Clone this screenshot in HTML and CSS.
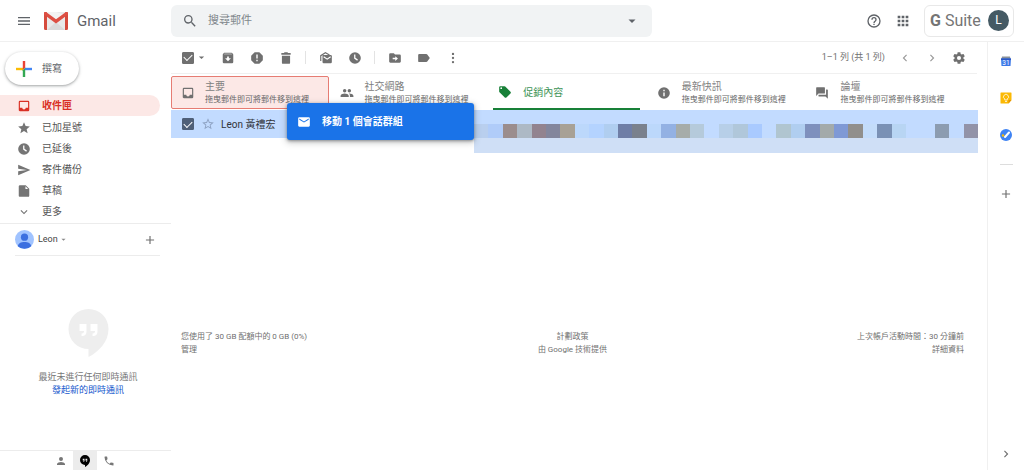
FILE: index.html
```html
<!DOCTYPE html>
<html lang="zh-Hant">
<head>
<meta charset="utf-8">
<meta name="viewport" content="width=device-width, initial-scale=1">
<title>Gmail</title>
<link rel="stylesheet" href="styles.css">
</head>
<body>
<svg class="sprite" aria-hidden="true">
  <symbol id="menu" viewBox="0 0 24 24"><path d="M3 18h18v-2H3v2zm0-5h18v-2H3v2zm0-7v2h18V6H3z"/></symbol>
  <symbol id="search" viewBox="0 0 24 24"><path d="M15.5 14h-.79l-.28-.27A6.47 6.47 0 0 0 16 9.5 6.5 6.5 0 1 0 9.5 16c1.61 0 3.09-.59 4.23-1.57l.27.28v.79l5 4.99L20.49 19l-4.99-5zm-6 0a4.5 4.5 0 1 1 0-9 4.5 4.5 0 0 1 0 9z"/></symbol>
  <symbol id="caret" viewBox="0 0 24 24"><path d="M5 9l7 7 7-7z"/></symbol>
  <symbol id="help" viewBox="0 0 24 24"><path d="M11 18h2v-2h-2v2zm1-16a10 10 0 1 0 0 20 10 10 0 0 0 0-20zm0 18a8 8 0 1 1 0-16 8 8 0 0 1 0 16zm0-14a4 4 0 0 0-4 4h2a2 2 0 1 1 4 0c0 2-3 1.750-3 5h2c0-2.250 3-2.500 3-5a4 4 0 0 0-4-4z"/></symbol>
  <symbol id="apps" viewBox="0 0 24 24"><path d="M4 8h4V4H4v4zm6 12h4v-4h-4v4zm-6 0h4v-4H4v4zm0-6h4v-4H4v4zm6 0h4v-4h-4v4zm6-10v4h4V4h-4zm-6 4h4V4h-4v4zm6 6h4v-4h-4v4zm0 6h4v-4h-4v4z"/></symbol>
  <symbol id="inbox" viewBox="0 0 24 24"><path d="M19 3H5a2 2 0 0 0-2 2v14c0 1.100.890 2 2 2h14a2 2 0 0 0 2-2V5a2 2 0 0 0-2-2zm0 12h-4a3 3 0 0 1-6 0H5V5h14v10z"/></symbol>
  <symbol id="star" viewBox="0 0 24 24"><path d="M12 17.270L18.180 21l-1.640-7.030L22 9.240l-7.190-.610L12 2 9.190 8.630 2 9.240l5.460 4.730L5.820 21z"/></symbol>
  <symbol id="star-line" viewBox="0 0 24 24"><path d="M22 9.240l-7.190-.620L12 2 9.190 8.630 2 9.240l5.460 4.730L5.820 21 12 17.270 18.180 21l-1.630-7.030L22 9.240zM12 15.400l-3.760 2.270 1-4.280-3.320-2.880 4.380-.380L12 6.100l1.710 4.040 4.380.380-3.320 2.880 1 4.280L12 15.400z"/></symbol>
  <symbol id="clock" viewBox="0 0 24 24"><path fill-rule="evenodd" d="M12 2a10 10 0 1 0 0 20 10 10 0 0 0 0-20zM10.500 6h2.200v5.700l4.300 3-1.200 1.800-5.300-3.700z"/></symbol>
  <symbol id="send" viewBox="0 0 24 24"><path d="M2.010 21L23 12 2.010 3 2 10l15 2-15 2z"/></symbol>
  <symbol id="file" viewBox="0 0 24 24"><path d="M5 2a2 2 0 0 0-2 2v16c0 1.100.890 2 2 2h14a2 2 0 0 0 2-2V8l-6-6H5zm9.500 6.500V4L19 8.500z"/></symbol>
  <symbol id="down" viewBox="0 0 24 24"><path d="M7.410 8.590L12 13.170l4.590-4.580L18 10l-6 6-6-6z"/></symbol>
  <symbol id="left" viewBox="0 0 24 24"><path d="M15.410 7.410L14 6l-6 6 6 6 1.410-1.410L10.830 12z"/></symbol>
  <symbol id="right" viewBox="0 0 24 24"><path d="M10 6L8.590 7.410 13.170 12l-4.580 4.590L10 18l6-6z"/></symbol>
  <symbol id="plus" viewBox="0 0 24 24"><path d="M19 13h-6v6h-2v-6H5v-2h6V5h2v6h6v2z"/></symbol>
  <symbol id="archive" viewBox="0 0 24 24"><path fill-rule="evenodd" d="M20.540 5.230l-1.390-1.680A1.450 1.450 0 0 0 18 3H6c-.470 0-.880.210-1.160.550L3.460 5.230A2 2 0 0 0 3 6.500V19a2 2 0 0 0 2 2h14a2 2 0 0 0 2-2V6.500c0-.480-.170-.930-.460-1.270zM5.100 5.500L6 4.600h12l.900.900zM12 17.500L7 12.500h3.500V9.500h3v3H17z"/></symbol>
  <symbol id="spam" viewBox="0 0 24 24"><path fill-rule="evenodd" d="M8 2h8l6 6v8l-6 6H8l-6-6V8zm2.800 4v7h2.400V6zm0 9v2.500h2.400V15z"/></symbol>
  <symbol id="trash" viewBox="0 0 24 24"><path d="M5 8v12a2 2 0 0 0 2 2h10a2 2 0 0 0 2-2V8zM4 3.500v2.800h16V3.500h-4.500L14.500 2h-5l-1 1.500z"/></symbol>
  <symbol id="unread" viewBox="0 0 24 24"><path d="M6 7h14a2 2 0 0 1 2 2v10a2 2 0 0 1-2 2H8a2 2 0 0 1-2-2z"/><path d="M3 17V8l8-5 7 4" fill="none" stroke="currentColor" stroke-width="2"/><path d="M8 10l6 4 6-4" fill="none" stroke="#fff" stroke-width="2"/></symbol>
  <symbol id="move" viewBox="0 0 24 24"><path fill-rule="evenodd" d="M20 6h-8l-2-2H4a2 2 0 0 0-2 2v12a2 2 0 0 0 2 2h16a2 2 0 0 0 2-2V8a2 2 0 0 0-2-2zm-7.500 11v-2.700H8v-2.600h4.500V9l4.500 4z"/></symbol>
  <symbol id="label" viewBox="0 0 24 24"><path d="M17.630 5.840A2 2 0 0 0 16 5H4a2 2 0 0 0-2 2v10a2 2 0 0 0 2 2h12c.670 0 1.270-.330 1.630-.840L22 12z"/></symbol>
  <symbol id="more" viewBox="0 0 24 24"><path d="M12 7a2 2 0 1 0 0-4 2 2 0 0 0 0 4zm0 3a2 2 0 1 0 0 4 2 2 0 0 0 0-4zm0 7a2 2 0 1 0 0 4 2 2 0 0 0 0-4z"/></symbol>
  <symbol id="gear" viewBox="0 0 24 24"><path d="M19.430 12.980c.040-.320.070-.640.070-.980s-.030-.660-.070-.980l2.110-1.650a.5.5 0 0 0 .120-.640l-2-3.460a.5.5 0 0 0-.610-.220l-2.490 1a7.300 7.300 0 0 0-1.690-.980l-.380-2.650A.5.5 0 0 0 14 2h-4a.5.5 0 0 0-.490.420l-.380 2.650c-.610.250-1.170.590-1.690.980l-2.490-1a.5.5 0 0 0-.610.220l-2 3.460a.5.5 0 0 0 .120.640l2.110 1.650a8 8 0 0 0 0 1.960l-2.110 1.650a.5.5 0 0 0-.120.640l2 3.460c.120.220.390.300.610.220l2.490-1c.520.400 1.080.730 1.690.980l.380 2.650c.030.240.240.420.490.420h4c.250 0 .460-.180.490-.420l.380-2.650a7.700 7.700 0 0 0 1.690-.980l2.490 1c.230.090.490 0 .610-.220l2-3.460a.5.5 0 0 0-.120-.640zM12 15.500a3.500 3.500 0 1 1 0-7 3.500 3.500 0 0 1 0 7z"/></symbol>
  <symbol id="people" viewBox="0 0 24 24"><path d="M16 11a3 3 0 1 0 0-6 3 3 0 0 0 0 6zm-8 0a3 3 0 1 0 0-6 3 3 0 0 0 0 6zm0 2c-2.330 0-7 1.170-7 3.500V19h14v-2.500C15 14.170 10.330 13 8 13zm8 0c-.290 0-.620.020-.970.050A4.200 4.200 0 0 1 17 16.500V19h6v-2.500c0-2.330-4.670-3.500-7-3.500z"/></symbol>
  <symbol id="tag" viewBox="0 0 24 24"><path d="M21.410 11.580l-9-9A2 2 0 0 0 11 2H4a2 2 0 0 0-2 2v7c0 .550.220 1.050.590 1.420l9 9c.360.360.860.580 1.410.580s1.050-.220 1.410-.590l7-7a2 2 0 0 0 0-2.830zM5.500 7a1.500 1.500 0 1 1 0-3 1.500 1.500 0 0 1 0 3z"/></symbol>
  <symbol id="info" viewBox="0 0 24 24"><path fill-rule="evenodd" d="M12 2a10 10 0 1 0 0 20 10 10 0 0 0 0-20zm1.200 15.500h-2.400V11h2.400zm0-8.500h-2.400V6.500h2.400z"/></symbol>
  <symbol id="forum" viewBox="0 0 24 24"><path d="M21 6h-2v9H6v2c0 .550.450 1 1 1h11l4 4V7c0-.550-.450-1-1-1zm-4 6V3c0-.550-.450-1-1-1H3c-.550 0-1 .450-1 1v14l4-4h10c.550 0 1-.450 1-1z"/></symbol>
  <symbol id="mail" viewBox="0 0 24 24"><path d="M20 4H4a2 2 0 0 0-1.990 2L2 18a2 2 0 0 0 2 2h16a2 2 0 0 0 2-2V6a2 2 0 0 0-2-2zm0 4l-8 5-8-5V6l8 5 8-5v2z"/></symbol>
  <symbol id="person" viewBox="0 0 24 24"><path d="M12 12a4 4 0 1 0 0-8 4 4 0 0 0 0 8zm0 2c-2.670 0-8 1.340-8 4v2h16v-2c0-2.660-5.330-4-8-4z"/></symbol>
  <symbol id="phone" viewBox="0 0 24 24"><path d="M6.620 10.790a15 15 0 0 0 6.590 6.590l2.200-2.200a1 1 0 0 1 1.020-.240c1.120.370 2.330.570 3.570.570a1 1 0 0 1 1 1V20a1 1 0 0 1-1 1A17 17 0 0 1 3 4a1 1 0 0 1 1-1h3.500a1 1 0 0 1 1 1c0 1.250.200 2.450.570 3.570a1 1 0 0 1-.250 1.020z"/></symbol>
  <symbol id="hangouts" viewBox="0 0 40 48"><path fill-rule="evenodd" d="M20 0a20 20 0 0 0 0 40v8c10-5 20-15 20-28A20 20 0 0 0 20 0zM11 15h7v7c0 3-1 5-5 5v-2.500c2 0 2.500-1 2.500-2.500H11zm11 0h7v7c0 3-1 5-5 5v-2.500c2 0 2.500-1 2.500-2.500H22z"/></symbol>
</svg>

<header class="topbar">
  <div class="brand">
    <button class="icon-button" aria-label="主選單"><svg class="icon icon-l"><use href="#menu"/></svg></button>
    <a class="logo" href="#">
      <svg class="logo-mark" viewBox="0 0 24 18" aria-hidden="true">
        <rect width="24" height="18" rx="1.500" fill="#e9e9e9"/>
        <path d="M3 18l9-8 9 8z" fill="#dadada"/>
        <path d="M3 3l9 7 9-7v0L12 0H3z" fill="#f3f3f3"/>
        <path d="M0 1.500A1.500 1.500 0 0 1 3 1.200V18H1.500A1.500 1.500 0 0 1 0 16.500zM24 1.500a1.500 1.500 0 0 0-3-.300V18h1.500a1.500 1.500 0 0 0 1.500-1.500z" fill="#d54b3d"/>
        <path d="M0 1.500C0 0 1.600-.500 2.700.400L12 7.300 21.300.400C22.400-.500 24 0 24 1.500c0 .700-.300 1.300-.900 1.700L12 11.400.900 3.200C.300 2.800 0 2.200 0 1.500z" fill="#dd4f43"/>
      </svg>
      <span>Gmail</span>
    </a>
  </div>
  <form class="search">
    <button class="icon-button" type="button" aria-label="搜尋"><svg class="icon icon-l"><use href="#search"/></svg></button>
    <input type="text" placeholder="搜尋郵件" aria-label="搜尋郵件">
    <button class="icon-button" type="button" aria-label="搜尋選項"><svg class="icon icon-s"><use href="#caret"/></svg></button>
  </form>
  <div class="account">
    <button class="icon-button" aria-label="支援"><svg class="icon icon-l"><use href="#help"/></svg></button>
    <button class="icon-button" aria-label="應用程式"><svg class="icon icon-l"><use href="#apps"/></svg></button>
    <button class="suite"><span><b>G</b> Suite</span><span class="avatar">L</span></button>
  </div>
</header>

<div class="shell">
  <aside class="sidebar">
    <button class="compose">
      <svg class="compose-plus" viewBox="0 0 16 16" aria-hidden="true"><path fill="#fbbc04" d="M0 6.800h7v2.400H0z"/><path fill="#4285f4" d="M9 6.800h7v2.400H9z"/><path fill="#ea4335" d="M6.800 0h2.400v6.800L6.800 9.200z"/><path fill="#34a853" d="M6.800 9.200l2.400-2.400V16H6.800z"/></svg>
      撰寫
    </button>
    <nav class="folders">
      <a class="current" href="#"><svg class="icon"><use href="#inbox"/></svg>收件匣</a>
      <a href="#"><svg class="icon"><use href="#star"/></svg>已加星號</a>
      <a href="#"><svg class="icon"><use href="#clock"/></svg>已延後</a>
      <a href="#"><svg class="icon"><use href="#send"/></svg>寄件備份</a>
      <a href="#"><svg class="icon"><use href="#file"/></svg>草稿</a>
      <a href="#"><svg class="icon"><use href="#down"/></svg>更多</a>
    </nav>
    <section class="chat">
      <div class="chat-user">
        <svg class="chat-avatar" viewBox="0 0 20 20" aria-hidden="true"><circle cx="10" cy="10" r="10" fill="#a0c3ff"/><circle cx="10" cy="7.500" r="3.800" fill="#3b6fe0"/><path d="M3 17c0-6 14-6 14 0a10 10 0 0 1-14 0z" fill="#3b6fe0"/></svg>
        <button class="chat-name">Leon <svg class="icon icon-xs"><use href="#caret"/></svg></button>
        <button class="icon-button" aria-label="新增即時通訊"><svg class="icon"><use href="#plus"/></svg></button>
      </div>
      <div class="chat-empty">
        <svg class="chat-logo"><use href="#hangouts"/></svg>
        <p>最近未進行任何即時通訊</p>
        <a href="#">發起新的即時通訊</a>
      </div>
      <div class="chat-tabs">
        <button aria-label="聯絡人"><svg class="icon"><use href="#person"/></svg></button>
        <button class="current" aria-label="即時通訊"><svg class="icon icon-s"><use href="#hangouts"/></svg></button>
        <button aria-label="電話"><svg class="icon"><use href="#phone"/></svg></button>
      </div>
    </section>
  </aside>

  <main class="content">
    <div class="toolbar">
      <input class="check" type="checkbox" checked aria-label="全選">
      <button class="select-menu" aria-label="選取"><svg class="icon icon-xs"><use href="#caret"/></svg></button>
      <button class="tool" aria-label="封存"><svg class="icon"><use href="#archive"/></svg></button>
      <button class="tool" aria-label="回報為垃圾郵件"><svg class="icon"><use href="#spam"/></svg></button>
      <button class="tool" aria-label="刪除"><svg class="icon"><use href="#trash"/></svg></button>
      <span class="separator"></span>
      <button class="tool" aria-label="標示為未讀取"><svg class="icon"><use href="#unread"/></svg></button>
      <button class="tool" aria-label="延後"><svg class="icon"><use href="#clock"/></svg></button>
      <span class="separator"></span>
      <button class="tool" aria-label="移至"><svg class="icon"><use href="#move"/></svg></button>
      <button class="tool" aria-label="標籤"><svg class="icon"><use href="#label"/></svg></button>
      <button class="tool" aria-label="更多"><svg class="icon"><use href="#more"/></svg></button>
      <span class="count">1–1 列 (共 1 列)</span>
      <button class="pager" aria-label="較新"><svg class="icon"><use href="#left"/></svg></button>
      <button class="pager" aria-label="較舊"><svg class="icon"><use href="#right"/></svg></button>
      <button class="pager settings" aria-label="設定"><svg class="icon"><use href="#gear"/></svg></button>
    </div>

    <div class="tabs">
      <a class="tab drop-target" href="#"><svg class="icon"><use href="#inbox"/></svg><span><b>主要</b><small>拖曳郵件即可將郵件移到這裡</small></span></a>
      <a class="tab" href="#"><svg class="icon"><use href="#people"/></svg><span><b>社交網路</b><small>拖曳郵件即可將郵件移到這裡</small></span></a>
      <a class="tab active" href="#"><svg class="icon"><use href="#tag"/></svg><span><b>促銷內容</b></span></a>
      <a class="tab" href="#"><svg class="icon"><use href="#info"/></svg><span><b>最新快訊</b><small>拖曳郵件即可將郵件移到這裡</small></span></a>
      <a class="tab" href="#"><svg class="icon"><use href="#forum"/></svg><span><b>論壇</b><small>拖曳郵件即可將郵件移到這裡</small></span></a>
    </div>

    <div class="message">
      <div class="message-from">
        <input class="check" type="checkbox" checked aria-label="選取 Leon 黃禮宏">
        <button class="icon-button" aria-label="星號"><svg class="icon"><use href="#star-line"/></svg></button>
        <span>Leon 黃禮宏</span>
      </div>
      <div class="message-hidden">
        <div class="mosaic">
          <i class="c1"></i><i class="c2"></i><i class="c3"></i><i class="c4"></i><i class="c5"></i><i class="c6"></i><i class="c7"></i>
          <i class="c8"></i><i class="c9"></i><i class="c10"></i><i class="c11"></i><i class="c12"></i><i class="c8"></i><i class="c13"></i>
          <i class="c14"></i><i class="c15"></i><i></i><i class="c16"></i><i class="c17"></i><i class="c18"></i><i></i>
          <i class="c19"></i><i class="c10"></i><i class="c20"></i><i class="c21"></i><i class="c22"></i><i class="c23"></i><i class="c24"></i>
          <i class="c25"></i><i class="c26"></i><i></i><i></i><i class="c27"></i><i></i><i class="c28"></i>
        </div>
      </div>
    </div>

    <div class="drag-card"><svg class="icon"><use href="#mail"/></svg>移動 1 個會話群組</div>

    <footer class="footer">
      <div>您使用了 30 GB 配額中的 0 GB (0%)<br><a href="#">管理</a></div>
      <div><a href="#">計劃政策</a><br>由 Google 技術提供</div>
      <div>上次帳戶活動時間：30 分鐘前<br><a href="#">詳細資料</a></div>
    </footer>
  </main>

  <aside class="rail">
    <button aria-label="日曆"><svg class="app" viewBox="0 0 24 24"><path d="M4 3h16l1 5H3z" fill="#8b9299"/><path d="M2 7h20l-1 15H3z" fill="#3b78e7"/><path d="M2 7h20v3H2z" fill="#2a56c6"/><text x="12" y="20" class="app-day">31</text></svg></button>
    <button aria-label="Keep"><svg class="app" viewBox="0 0 24 24"><path d="M2 1h20a1 1 0 0 1 1 1v14l-6 7H2a1 1 0 0 1-1-1V2a1 1 0 0 1 1-1z" fill="#fbb905"/><path d="M23 16l-6 7v-7z" fill="#e59400"/><path d="M10 19h4M9.500 14a5 5 0 1 1 5 0v2h-5z" fill="none" stroke="#fff" stroke-width="1.500"/></svg></button>
    <button aria-label="Tasks"><svg class="app" viewBox="0 0 24 24"><circle cx="12" cy="12" r="12" fill="#3f83f3"/><circle cx="6" cy="13" r="2.500" fill="#fbbc04"/><path d="M10 16L18 7" stroke="#fff" stroke-width="4" stroke-linecap="round"/></svg></button>
    <hr>
    <button aria-label="取得外掛程式"><svg class="icon"><use href="#plus"/></svg></button>
    <button class="rail-toggle" aria-label="隱藏側邊面板"><svg class="icon"><use href="#right"/></svg></button>
  </aside>
</div>
</body>
</html>
```

FILE: styles.css
```css
* { box-sizing: border-box; }

body {
  margin: 0;
  min-height: 100vh;
  display: flex;
  flex-direction: column;
  background: #fff;
  color: #707070;
  font: 10px/13px Roboto, "Noto Sans CJK TC", sans-serif;
}

button {
  border: 0;
  padding: 0;
  background: none;
  color: inherit;
  font: inherit;
  cursor: pointer;
}

a { color: inherit; text-decoration: none; }
p { margin: 0; }

.sprite { display: none; }

.icon {
  flex: none;
  display: block;
  width: 14px;
  height: 14px;
  fill: currentColor;
}
.icon-l { width: 16px; height: 16px; }
.icon-s { width: 12px; height: 12px; }
.icon-xs { width: 9px; height: 9px; }

.icon-button { display: grid; place-items: center; }

/* Top bar */
.topbar {
  display: flex;
  align-items: center;
  height: 42px;
  padding-right: 10px;
  border-bottom: 1px solid #f0f0f0;
  color: #5f6368;
}
.brand {
  flex: none;
  display: flex;
  align-items: center;
  gap: 12px;
  width: 171px;
  padding-left: 16px;
}
.logo {
  display: flex;
  align-items: center;
  gap: 9px;
  font-size: 15px;
  line-height: 20px;
}
.logo-mark { width: 24px; height: 18px; }

.search {
  flex: 0 1 481px;
  display: flex;
  align-items: center;
  height: 32px;
  padding: 0 14px 0 11px;
  border-radius: 6px;
  background: #f1f3f4;
}
.search input {
  flex: 1;
  min-width: 0;
  padding: 0 10px;
  border: 0;
  outline: 0;
  background: none;
  font: inherit;
  font-size: 11px;
  color: #5f6368;
}
.search input::placeholder { color: #80868b; opacity: 1; }

.account {
  display: flex;
  align-items: center;
  gap: 13px;
  margin-left: auto;
}
.suite {
  display: flex;
  align-items: center;
  justify-content: space-between;
  width: 90px;
  height: 32px;
  padding: 0 4px 0 5px;
  border: 1px solid #e8e8e8;
  border-radius: 6px;
  color: #757575;
  font-size: 16px;
  white-space: nowrap;
}
.avatar {
  display: grid;
  place-items: center;
  width: 21px;
  height: 21px;
  border-radius: 50%;
  background: #455a64;
  color: #fff;
  font-size: 12px;
}

/* Page columns */
.shell {
  flex: 1;
  display: grid;
  grid-template-columns: 171px 1fr 37px;
}

/* Sidebar */
.sidebar { display: flex; flex-direction: column; }

.compose {
  display: flex;
  align-items: center;
  gap: 10px;
  align-self: flex-start;
  height: 33px;
  margin: 10px 0 10px 5px;
  padding: 0 17px 0 11px;
  border-radius: 17px;
  box-shadow: 0 1px 2px rgba(60, 64, 67, .3), 0 1px 3px 1px rgba(60, 64, 67, .15);
  color: #5f6368;
}
.compose-plus { width: 16px; height: 16px; }

.folders { padding-bottom: 1px; border-bottom: 1px solid #ececec; }
.folders a {
  display: flex;
  align-items: center;
  gap: 11px;
  height: 21px;
  margin-right: 11px;
  padding-left: 17px;
  border-radius: 0 11px 11px 0;
  color: #555;
}
.folders .icon { color: #757575; }
.folders .current { margin-bottom: 1px; background: #fce8e6; color: #d93025; font-weight: 700; }
.folders .current .icon { color: #d93025; }

.chat { flex: 1; display: flex; flex-direction: column; }
.chat-user {
  display: flex;
  align-items: center;
  height: 32px;
  margin: 0 11px 0 15px;
  padding-right: 3px;
  border-bottom: 1px solid #ececec;
}
.chat-avatar { width: 19px; height: 19px; margin-right: 4px; }
.chat-name {
  display: flex;
  align-items: center;
  gap: 2px;
  margin-right: auto;
  color: #444;
  font-size: 9px;
}
.chat-name .icon { width: 7px; height: 7px; color: #888; }

.chat-empty {
  flex: 1;
  display: flex;
  flex-direction: column;
  align-items: center;
  justify-content: center;
  padding-left: 5px;
  color: #777;
  font-size: 9px;
}
.chat-empty a { color: #1155cc; }
.chat-logo { width: 41px; height: 48px; margin-bottom: 14px; fill: #eee; }

.chat-tabs {
  display: flex;
  justify-content: center;
  height: 20px;
  padding-right: 2px;
  border-top: 1px solid #ececec;
}
.chat-tabs button { display: grid; place-items: center; width: 24px; color: #777; }
.chat-tabs .icon { width: 12px; height: 12px; }
.chat-tabs .current { background: #ececec; color: #000; }

/* Mail area */
.content { position: relative; min-width: 0; }

.toolbar {
  display: flex;
  align-items: center;
  height: 32px;
  margin-right: 10px;
  padding: 0 5px 0 11px;
  border-bottom: 1px solid #f0f0f0;
}

.check {
  appearance: none;
  flex: none;
  display: grid;
  place-items: center;
  width: 12px;
  height: 12px;
  margin: 0;
  border: 1px solid #707070;
  border-radius: 1px;
}
.check:checked { background: #707070; }
.check:checked::after {
  content: "";
  width: 7px;
  height: 4px;
  margin-bottom: 2px;
  border: solid #fff;
  border-width: 0 0 1px 1px;
  transform: rotate(-45deg);
}

.select-menu { margin: 0 7px 0 3px; }
.tool { display: grid; place-items: center; width: 29px; height: 24px; }
.separator { width: 1px; height: 13px; margin: 0 5px; background: #e3e3e3; }
.count { margin: 0 6px 0 auto; font-size: 9px; white-space: nowrap; }
.pager { display: grid; place-items: center; width: 27px; height: 24px; color: #999; }
.settings { color: #707070; }

.tabs {
  display: grid;
  grid-template-columns: repeat(5, 1fr);
  height: 36px;
  padding: 2px 23px 0 0;
}
.tab {
  display: flex;
  align-items: center;
  gap: 11px;
  min-width: 0;
  padding-left: 10px;
  white-space: nowrap;
}
.tab b, .tab small { display: block; font-weight: 400; }
.tab b { color: #808080; }
.tab small { font-size: 8px; color: #666; }
.drop-target {
  gap: 10px;
  margin: 0 1px 1px 0;
  padding-left: 9px;
  border: 1px solid #e67c73;
  border-radius: 2px;
  background: #fce8e6;
}
.tab.active {
  margin: 0 7px 0 5px;
  padding-left: 5px;
  border-bottom: 2px solid #188038;
  color: #188038;
}
.tab.active b { color: #3d9457; }

.message {
  display: grid;
  grid-template-columns: 303px 1fr;
  align-items: start;
  margin-right: 9px;
}
.message-from {
  display: flex;
  align-items: center;
  height: 28px;
  padding-left: 11px;
  background: #c2dbff;
  color: #303338;
}
.message-from .check { border-color: #4f5f78; background: #4f5f78; }
.message-from .icon-button { margin: 0 6px 0 7px; color: #8fa3c4; }

.message-hidden {
  height: 43px;
  padding-top: 14px;
  background: linear-gradient(#c2dbff 28px, #cfdff6 28px);
}
.mosaic { display: grid; grid-template-columns: repeat(35, 1fr); height: 14px; }
.c1 { background: #b9cfee; }
.c2 { background: #b0ccf9; }
.c3 { background: #9b8d8d; }
.c4 { background: #adb9c5; }
.c5 { background: #92838f; }
.c6 { background: #83869c; }
.c7 { background: #a8a195; }
.c8 { background: #bcd8fb; }
.c9 { background: #b4d3ff; }
.c10 { background: #b0cef0; }
.c11 { background: #6f7ea6; }
.c12 { background: #7a818d; }
.c13 { background: #93b1e3; }
.c14 { background: #a6aca9; }
.c15 { background: #b5cadb; }
.c16 { background: #b7cfe8; }
.c17 { background: #b0c7da; }
.c18 { background: #a9caff; }
.c19 { background: #b0c5d0; }
.c20 { background: #7e90bd; }
.c21 { background: #a3aaaa; }
.c22 { background: #7f99d5; }
.c23 { background: #918f8c; }
.c24 { background: #c3dcfa; }
.c25 { background: #7a91b5; }
.c26 { background: #b8d5f3; }
.c27 { background: #8c9cb0; }
.c28 { background: #9293a8; }

/* Floats beside the pointer while a conversation is dragged */
.drag-card {
  position: absolute;
  top: 61px;
  left: 116px;
  display: flex;
  align-items: center;
  gap: 11px;
  width: 187px;
  height: 37px;
  padding-left: 10px;
  border-radius: 3px;
  background: #1a73e8;
  box-shadow: 0 1px 3px rgba(60, 64, 67, .5), 0 2px 6px 1px rgba(60, 64, 67, .25);
  color: #fff;
  font-weight: 700;
}

.footer {
  display: grid;
  grid-template-columns: 1fr 1fr 1fr;
  margin-top: 177px;
  padding: 0 23px 0 10px;
  font-size: 8px;
}
.footer div:nth-child(2) { text-align: center; }
.footer div:nth-child(3) { text-align: right; }

/* Side panel */
.rail {
  display: flex;
  flex-direction: column;
  align-items: center;
  padding: 7px 0 4px;
  border-left: 1px solid #f0f0f0;
}
.rail button { display: grid; place-items: center; width: 24px; height: 24px; margin-bottom: 13px; }
.rail hr { width: 13px; margin: 4px 0 17px; border: 0; border-top: 1px solid #ddd; }
.rail .rail-toggle { margin: auto 0 0; }
.app { width: 12px; height: 12px; }
.app-day { fill: #fff; font-size: 13px; text-anchor: middle; }
```
